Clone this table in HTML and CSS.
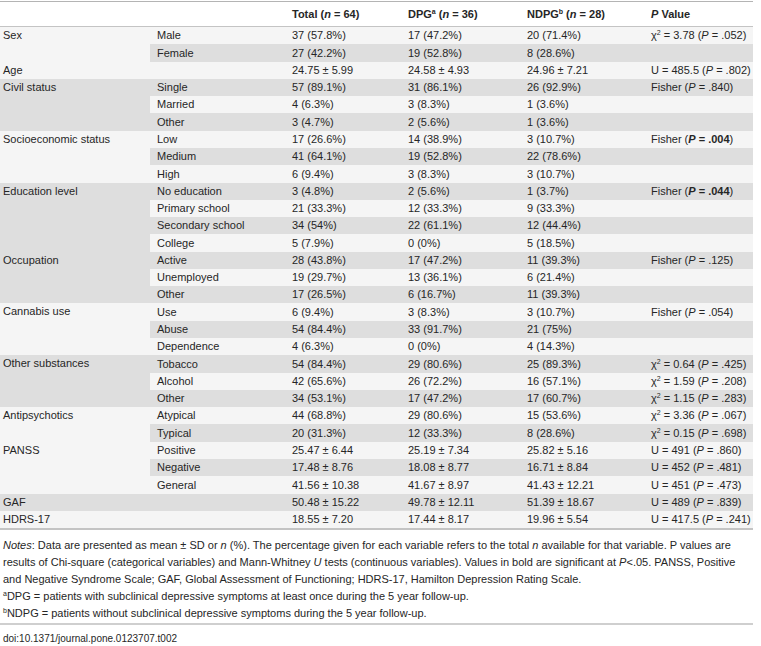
FILE: index.html
```html
<!DOCTYPE html>
<html>
<head>
<meta charset="utf-8">
<link rel="stylesheet" href="styles.css">
</head>
<body>
<div class="wrap">
<table class="tbl">
<colgroup>
<col class="c1"><col class="c2"><col class="c3"><col class="c4"><col class="c5"><col class="c6">
</colgroup>
<thead>
<tr>
<th></th><th></th>
<th>Total (<i>n</i> = 64)</th>
<th>DPG<sup>a</sup> (<i>n</i> = 36)</th>
<th>NDPG<sup>b</sup> (<i>n</i> = 28)</th>
<th><i>P</i> Value</th>
</tr>
</thead>
<tbody>
<tr class="l"><td rowspan="2">Sex</td><td>Male</td><td>37 (57.8%)</td><td>17 (47.2%)</td><td>20 (71.4%)</td><td>χ<sup>2</sup> = 3.78 (<i>P</i> = .052)</td></tr>
<tr class="d t"><td>Female</td><td>27 (42.2%)</td><td>19 (52.8%)</td><td>8 (28.6%)</td><td></td></tr>
<tr class="l"><td>Age</td><td></td><td>24.75 ± 5.99</td><td>24.58 ± 4.93</td><td>24.96 ± 7.21</td><td>U = 485.5 (<i>P</i> = .802)</td></tr>
<tr class="d"><td rowspan="3">Civil status</td><td>Single</td><td>57 (89.1%)</td><td>31 (86.1%)</td><td>26 (92.9%)</td><td>Fisher (<i>P</i> = .840)</td></tr>
<tr class="l"><td>Married</td><td>4 (6.3%)</td><td>3 (8.3%)</td><td>1 (3.6%)</td><td></td></tr>
<tr class="d t"><td>Other</td><td>3 (4.7%)</td><td>2 (5.6%)</td><td>1 (3.6%)</td><td></td></tr>
<tr class="l"><td rowspan="3">Socioeconomic status</td><td>Low</td><td>17 (26.6%)</td><td>14 (38.9%)</td><td>3 (10.7%)</td><td>Fisher (<b><i>P</i> = .004</b>)</td></tr>
<tr class="d"><td>Medium</td><td>41 (64.1%)</td><td>19 (52.8%)</td><td>22 (78.6%)</td><td></td></tr>
<tr class="l t"><td>High</td><td>6 (9.4%)</td><td>3 (8.3%)</td><td>3 (10.7%)</td><td></td></tr>
<tr class="d"><td rowspan="4">Education level</td><td>No education</td><td>3 (4.8%)</td><td>2 (5.6%)</td><td>1 (3.7%)</td><td>Fisher (<b><i>P</i> = .044</b>)</td></tr>
<tr class="l"><td>Primary school</td><td>21 (33.3%)</td><td>12 (33.3%)</td><td>9 (33.3%)</td><td></td></tr>
<tr class="d"><td>Secondary school</td><td>34 (54%)</td><td>22 (61.1%)</td><td>12 (44.4%)</td><td></td></tr>
<tr class="l t"><td>College</td><td>5 (7.9%)</td><td>0 (0%)</td><td>5 (18.5%)</td><td></td></tr>
<tr class="d"><td rowspan="3">Occupation</td><td>Active</td><td>28 (43.8%)</td><td>17 (47.2%)</td><td>11 (39.3%)</td><td>Fisher (<i>P</i> = .125)</td></tr>
<tr class="l"><td>Unemployed</td><td>19 (29.7%)</td><td>13 (36.1%)</td><td>6 (21.4%)</td><td></td></tr>
<tr class="d"><td>Other</td><td>17 (26.5%)</td><td>6 (16.7%)</td><td>11 (39.3%)</td><td></td></tr>
<tr class="l t"><td rowspan="3">Cannabis use</td><td>Use</td><td>6 (9.4%)</td><td>3 (8.3%)</td><td>3 (10.7%)</td><td>Fisher (<i>P</i> = .054)</td></tr>
<tr class="d"><td>Abuse</td><td>54 (84.4%)</td><td>33 (91.7%)</td><td>21 (75%)</td><td></td></tr>
<tr class="l"><td>Dependence</td><td>4 (6.3%)</td><td>0 (0%)</td><td>4 (14.3%)</td><td></td></tr>
<tr class="d t"><td rowspan="3">Other substances</td><td>Tobacco</td><td>54 (84.4%)</td><td>29 (80.6%)</td><td>25 (89.3%)</td><td>χ<sup>2</sup> = 0.64 (<i>P</i> = .425)</td></tr>
<tr class="l"><td>Alcohol</td><td>42 (65.6%)</td><td>26 (72.2%)</td><td>16 (57.1%)</td><td>χ<sup>2</sup> = 1.59 (<i>P</i> = .208)</td></tr>
<tr class="d"><td>Other</td><td>34 (53.1%)</td><td>17 (47.2%)</td><td>17 (60.7%)</td><td>χ<sup>2</sup> = 1.15 (<i>P</i> = .283)</td></tr>
<tr class="l"><td rowspan="2">Antipsychotics</td><td>Atypical</td><td>44 (68.8%)</td><td>29 (80.6%)</td><td>15 (53.6%)</td><td>χ<sup>2</sup> = 3.36 (<i>P</i> = .067)</td></tr>
<tr class="d t"><td>Typical</td><td>20 (31.3%)</td><td>12 (33.3%)</td><td>8 (28.6%)</td><td>χ<sup>2</sup> = 0.15 (<i>P</i> = .698)</td></tr>
<tr class="l"><td rowspan="3">PANSS</td><td>Positive</td><td>25.47 ± 6.44</td><td>25.19 ± 7.34</td><td>25.82 ± 5.16</td><td>U = 491 (<i>P</i> = .860)</td></tr>
<tr class="d"><td>Negative</td><td>17.48 ± 8.76</td><td>18.08 ± 8.77</td><td>16.71 ± 8.84</td><td>U = 452 (<i>P</i> = .481)</td></tr>
<tr class="l t"><td>General</td><td>41.56 ± 10.38</td><td>41.67 ± 8.97</td><td>41.43 ± 12.21</td><td>U = 451 (<i>P</i> = .473)</td></tr>
<tr class="d"><td>GAF</td><td></td><td>50.48 ± 15.22</td><td>49.78 ± 12.11</td><td>51.39 ± 18.67</td><td>U = 489 (<i>P</i> = .839)</td></tr>
<tr class="l"><td>HDRS-17</td><td></td><td>18.55 ± 7.20</td><td>17.44 ± 8.17</td><td>19.96 ± 5.54</td><td>U = 417.5 (<i>P</i> = .241)</td></tr>
</tbody>
</table>
<div class="notes">
<p><i>Notes</i>: Data are presented as mean ± SD or <i>n</i> (%). The percentage given for each variable refers to the total <i>n</i> available for that variable. P values are</p>
<p>results of Chi-square (categorical variables) and Mann-Whitney <i>U</i> tests (continuous variables). Values in bold are significant at <i>P</i>&lt;.05. PANSS, Positive</p>
<p>and Negative Syndrome Scale; GAF, Global Assessment of Functioning; HDRS-17, Hamilton Depression Rating Scale.</p>
<p><sup>a</sup>DPG = patients with subclinical depressive symptoms at least once during the 5 year follow-up.</p>
<p><sup>b</sup>NDPG = patients without subclinical depressive symptoms during the 5 year follow-up.</p>
</div>
<div class="doi">doi:10.1371/journal.pone.0123707.t002</div>
</div>
</body>
</html>
```
FILE: styles.css
```css
html, body {
  margin: 0;
  padding: 0;
  background: #fff;
}
body {
  font-family: "Liberation Sans", Arial, Helvetica, sans-serif;
  font-size: 11px;
  color: #262626;
}
.wrap {
  width: 753px;
  padding-top: 1px;
}
.tbl {
  width: 753px;
  border-collapse: collapse;
  table-layout: fixed;
  border-top: 1px solid #b4b4b4;
  border-bottom: 2px solid #c4c4c4;
}
.c1 { width: 150px; }
.c2 { width: 138px; }
.c3 { width: 116px; }
.c4 { width: 119px; }
.c5 { width: 124px; }
.c6 { width: 106px; }
.tbl th {
  height: 24px;
  padding: 0 0 0 4px;
  text-align: left;
  font-weight: bold;
  background: #fff;
  border-bottom: 1px solid #c4c4c4;
  white-space: nowrap;
}
.tbl td {
  height: 17px;
  padding: 0 0 0 4px;
  line-height: 13px;
  white-space: nowrap;
  vertical-align: middle;
}
.tbl tr.t td { height: 18px; }
.tbl td:first-child { padding-left: 3px; }
.tbl tr td:nth-last-child(5) { padding-left: 7px; }
.tbl th:nth-child(2) { padding-left: 7px; }
.tbl td[rowspan] {
  vertical-align: top;
  padding-top: 2px;
}
.l { background: #f5f5f5; }
.d { background: #dedede; }
sup {
  font-size: 7px;
  line-height: 0;
  vertical-align: 4px;
}
.notes {
  padding: 7px 0 1px 3px;
  border-bottom: 2px solid #cfcfcf;
}
.notes p {
  margin: 0;
  line-height: 17.1px;
  white-space: nowrap;
}
.doi {
  padding: 9px 0 0 3px;
  font-size: 10px;
  line-height: 10px;
}
```
